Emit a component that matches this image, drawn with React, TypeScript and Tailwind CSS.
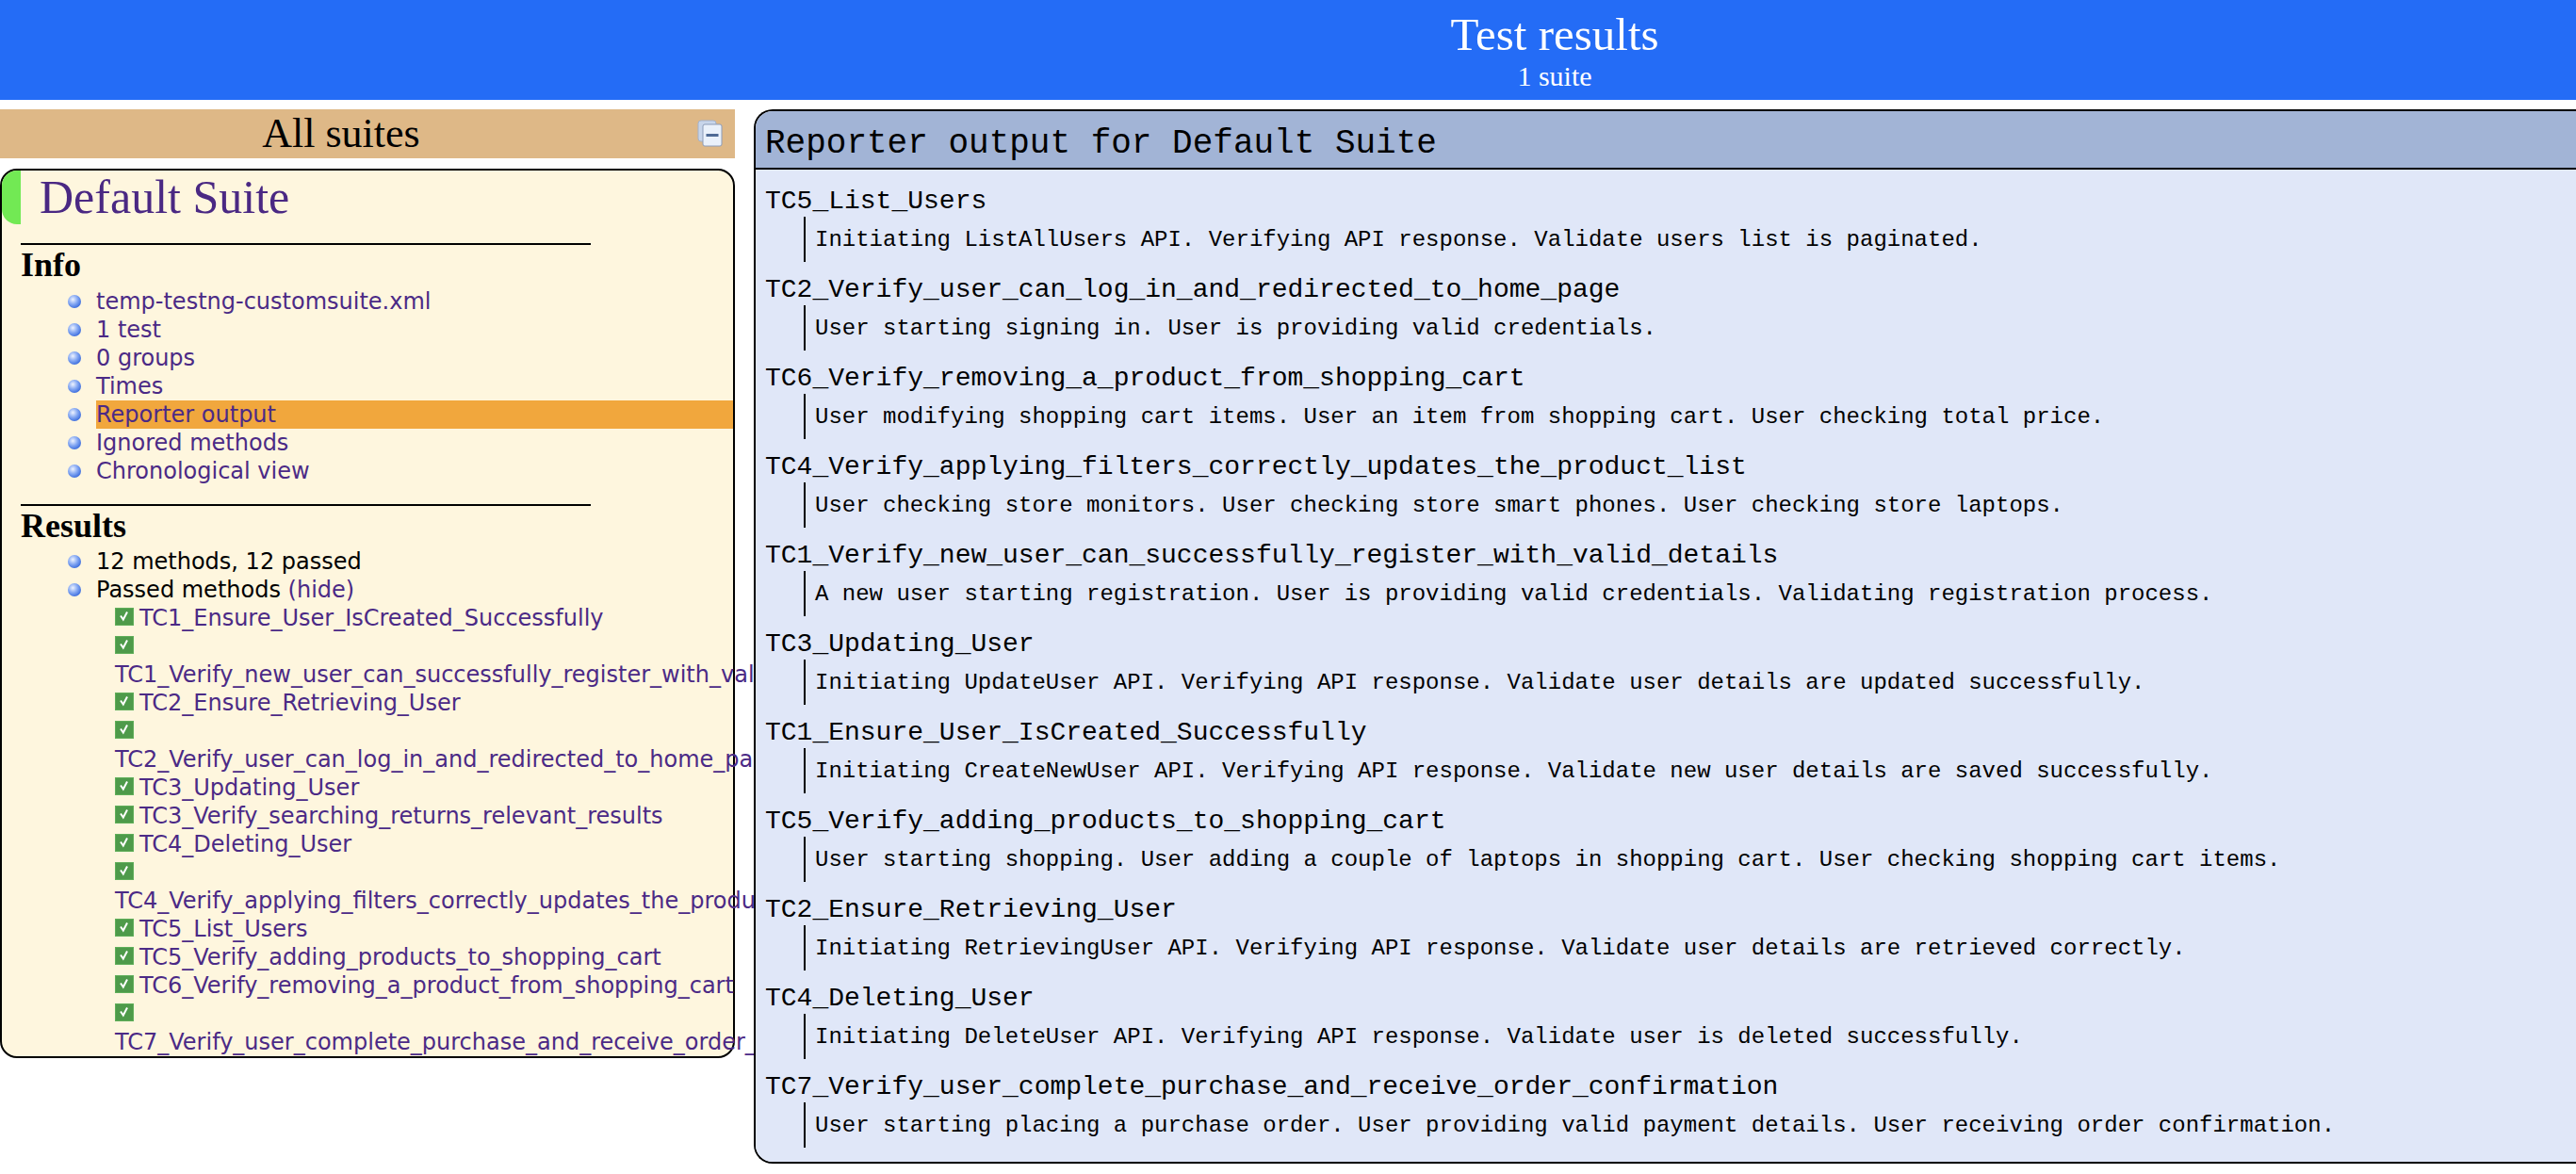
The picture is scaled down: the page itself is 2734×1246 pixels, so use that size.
const serif = "font-['Liberation_Serif','Times_New_Roman',serif]";
const sans = "font-['DejaVu_Sans',Verdana,sans-serif]";
const mono = "font-['Liberation_Mono','Courier_New',monospace]";

const infoLinks = [
  "temp-testng-customsuite.xml",
  "1 test",
  "0 groups",
  "Times",
  "Reporter output",
  "Ignored methods",
  "Chronological view",
];

// long names don't fit next to the icon, so they drop to the next line
const methods: { name: string; long?: boolean }[] = [
  { name: "TC1_Ensure_User_IsCreated_Successfully" },
  { name: "TC1_Verify_new_user_can_successfully_register_with_valid_details", long: true },
  { name: "TC2_Ensure_Retrieving_User" },
  { name: "TC2_Verify_user_can_log_in_and_redirected_to_home_page", long: true },
  { name: "TC3_Updating_User" },
  { name: "TC3_Verify_searching_returns_relevant_results" },
  { name: "TC4_Deleting_User" },
  { name: "TC4_Verify_applying_filters_correctly_updates_the_product_list", long: true },
  { name: "TC5_List_Users" },
  { name: "TC5_Verify_adding_products_to_shopping_cart" },
  { name: "TC6_Verify_removing_a_product_from_shopping_cart" },
  { name: "TC7_Verify_user_complete_purchase_and_receive_order_confirmation", long: true },
];

const output = [
  ["TC5_List_Users", "Initiating ListAllUsers API. Verifying API response. Validate users list is paginated."],
  ["TC2_Verify_user_can_log_in_and_redirected_to_home_page", "User starting signing in. User is providing valid credentials."],
  ["TC6_Verify_removing_a_product_from_shopping_cart", "User modifying shopping cart items. User an item from shopping cart. User checking total price."],
  ["TC4_Verify_applying_filters_correctly_updates_the_product_list", "User checking store monitors. User checking store smart phones. User checking store laptops."],
  ["TC1_Verify_new_user_can_successfully_register_with_valid_details", "A new user starting registration. User is providing valid credentials. Validating registration process."],
  ["TC3_Updating_User", "Initiating UpdateUser API. Verifying API response. Validate user details are updated successfully."],
  ["TC1_Ensure_User_IsCreated_Successfully", "Initiating CreateNewUser API. Verifying API response. Validate new user details are saved successfully."],
  ["TC5_Verify_adding_products_to_shopping_cart", "User starting shopping. User adding a couple of laptops in shopping cart. User checking shopping cart items."],
  ["TC2_Ensure_Retrieving_User", "Initiating RetrievingUser API. Verifying API response. Validate user details are retrieved correctly."],
  ["TC4_Deleting_User", "Initiating DeleteUser API. Verifying API response. Validate user is deleted successfully."],
  ["TC7_Verify_user_complete_purchase_and_receive_order_confirmation", "User starting placing a purchase order. User providing valid payment details. User receiving order confirmation."],
];

const Bullet = () => (
  <svg width="14" height="14" viewBox="0 0 14 14" className="shrink-0">
    <defs>
      <radialGradient id="ball" cx="38%" cy="35%" r="65%">
        <stop offset="0%" stopColor="#eef3ff" />
        <stop offset="55%" stopColor="#86a9f3" />
        <stop offset="100%" stopColor="#4272df" />
      </radialGradient>
    </defs>
    <circle cx="7" cy="7" r="7" fill="url(#ball)" />
  </svg>
);

const PassedIcon = () => (
  <svg width="20" height="19" viewBox="0 0 20 19" className="inline-block align-baseline">
    <rect x="0" y="0" width="20" height="19" fill="#4e9a4a" />
    <rect x="0.5" y="0.5" width="19" height="18" fill="none" stroke="#5fae59" />
    <path d="M6 8.5 L8.8 12.5 L13 4.5" fill="none" stroke="#ffffff" strokeWidth="2" />
  </svg>
);

const CollapseIcon = () => (
  <svg width="28" height="30" viewBox="0 0 28 30" className="shrink-0">
    <rect x="1" y="1" width="19" height="22" rx="3" fill="#c8d5ea" stroke="#a2b2cc" />
    <rect x="6" y="5" width="20" height="23" rx="2" fill="#eaf1fb" stroke="#8c9cb9" />
    <rect x="9.5" y="15" width="13" height="3" fill="#4f6a95" />
  </svg>
);

const ListRow = ({ children, selected }: { children: React.ReactNode; selected?: boolean }) => (
  <div className="flex items-center h-[30px] leading-[30px]">
    <div className="w-[84px] shrink-0 flex justify-end">
      <Bullet />
    </div>
    <div className={`ml-[16px] flex-1 whitespace-nowrap ${selected ? "bg-[#f1a73d]" : ""}`}>{children}</div>
  </div>
);

const SuitesPanel = () => (
  <div className="w-[800px] shrink-0 overflow-hidden">
    <div className="w-[780px]">
      <div className={`flex items-center h-[52px] bg-[#deb887] ${serif}`}>
        <span className="flex-1 text-center text-[44px] leading-[52px] text-black">All suites</span>
        <div className="ml-[16px] mr-[12px]">
          <CollapseIcon />
        </div>
      </div>

      <div className={`mt-[11px] border-2 border-black rounded-[18px] bg-[#fef6de] ${sans} text-[24px] text-[#4b2a86]`}>
        <div className="flex h-[57px]">
          <div className="w-[20px] bg-[#72e954] rounded-l-[16px]" />
          <span className={`ml-[20px] ${serif} text-[50px] leading-[57px] text-[#4a2883]`}>Default Suite</span>
        </div>

        <div className="ml-[20px] mt-[20px] w-[605px] h-[2px] bg-black" />
        <div className={`ml-[20px] mt-[1px] ${serif} font-bold text-[36px] leading-[40px] text-black`}>Info</div>
        <div className="mt-[4px]">
          {infoLinks.map((l) => (
            <ListRow key={l} selected={l === "Reporter output"}>
              {l}
            </ListRow>
          ))}
        </div>

        <div className="ml-[20px] mt-[20px] w-[605px] h-[2px] bg-black" />
        <div className={`ml-[20px] mt-[1px] ${serif} font-bold text-[36px] leading-[40px] text-black`}>Results</div>
        <div className="mt-[3px]">
          <ListRow>
            <span className="text-black">12 methods, 12 passed</span>
          </ListRow>
          <ListRow>
            <span className="text-black">Passed methods</span> (hide)
          </ListRow>
          <div className="ml-[120px] leading-[30px] whitespace-nowrap">
            {methods.map((m) =>
              m.long ? (
                <div key={m.name}>
                  <div className="h-[30px]">
                    <PassedIcon />
                  </div>
                  <div className="h-[30px]">{m.name}</div>
                </div>
              ) : (
                <div key={m.name} className="h-[30px]">
                  <PassedIcon />
                  <span className="ml-[6px]">{m.name}</span>
                </div>
              ),
            )}
          </div>
        </div>
      </div>
    </div>
  </div>
);

const ReporterPanel = () => (
  <div className={`flex-1 min-w-0 border-2 border-r-0 border-black rounded-l-[20px] overflow-hidden ${mono} text-black`}>
    <div className="h-[62px] bg-[#a2b4d6] border-b-2 border-black pl-[10px] pt-[14px] text-[36px] leading-[41px] whitespace-nowrap">
      Reporter output for Default Suite
    </div>
    <div className="bg-[#e0e7f8] pl-[10px] pt-[18px] pb-[15px] flex flex-col gap-[14px]">
      {output.map(([name, msg]) => (
        <div key={name}>
          <div className="text-[28px] leading-[32px] whitespace-nowrap">{name}</div>
          <div className="ml-[41px] border-l-2 border-black pl-[10px] pt-[11px] pb-[9px] text-[24px] leading-[28px] whitespace-nowrap">
            {msg}
          </div>
        </div>
      ))}
    </div>
  </div>
);

export default function App() {
  return (
    <div className="w-[2734px] bg-white">
      <div className={`h-[106px] bg-[#246cf6] text-white text-center pl-[566px] pt-[10px] ${serif}`}>
        <div className="text-[49px] leading-[54px]">Test results</div>
        <div className="text-[30px] leading-[34px]">1 suite</div>
      </div>
      <div className="flex items-start pt-[10px]">
        <SuitesPanel />
        <ReporterPanel />
      </div>
    </div>
  );
}
